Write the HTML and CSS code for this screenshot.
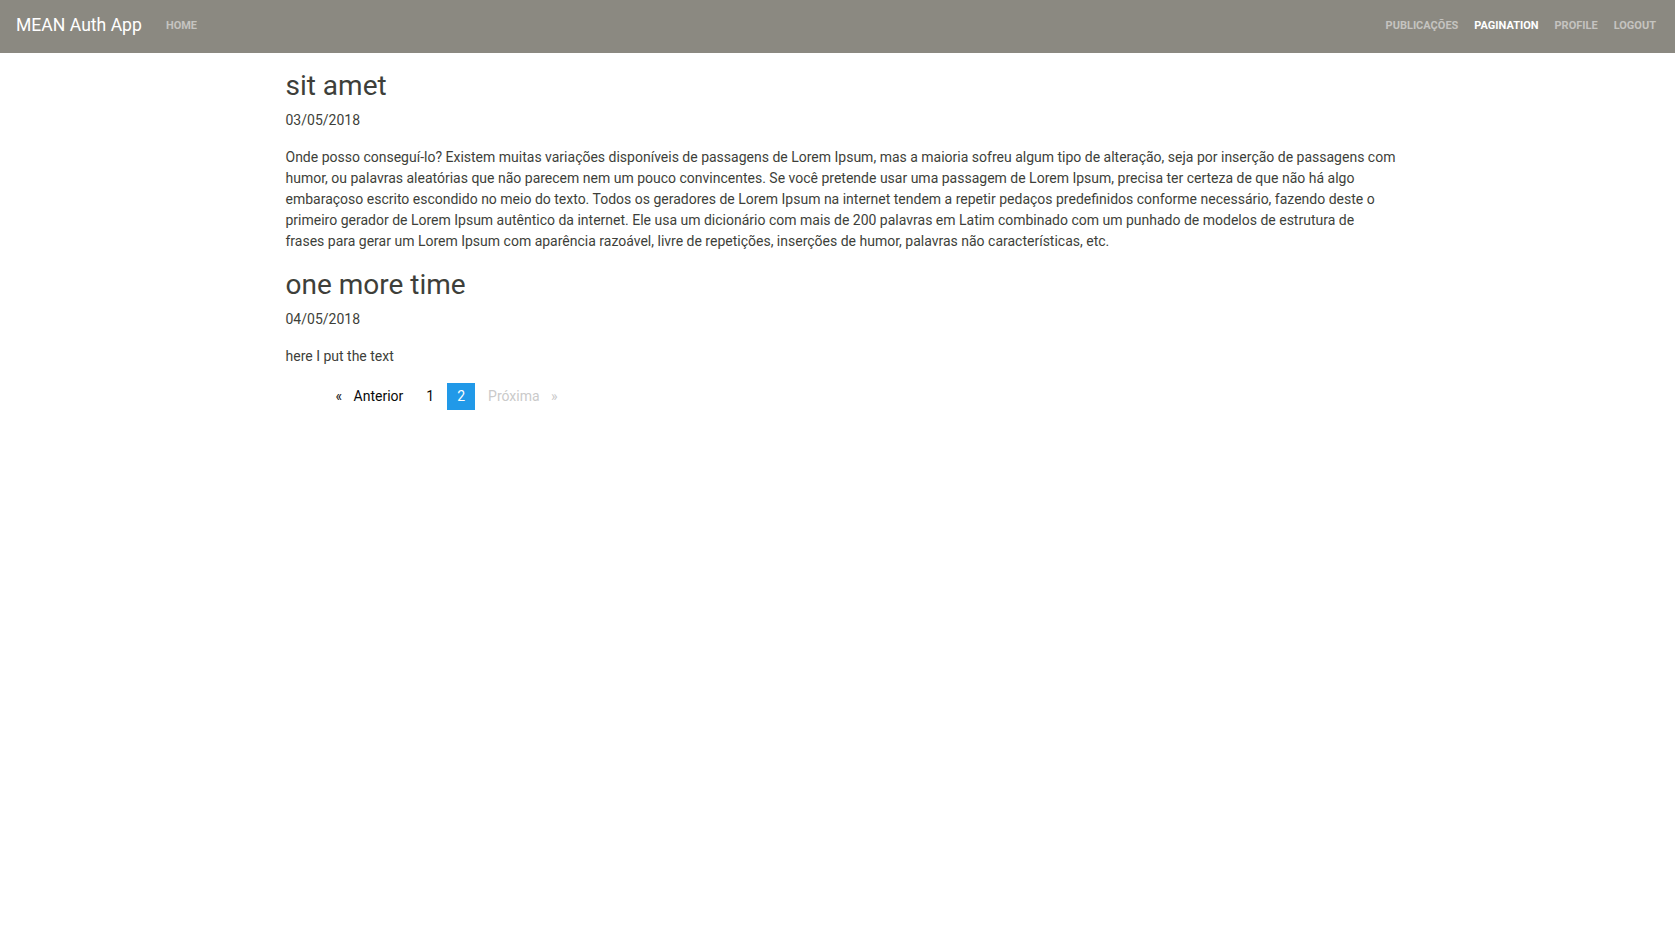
FILE: index.html
```html
<!DOCTYPE html>
<html lang="pt">
<head>
<meta charset="utf-8">
<title>MEAN Auth App</title>
<link rel="stylesheet" href="styles.css">
</head>
<body>
<nav class="navbar">
  <a class="brand" href="#">MEAN Auth App</a>
  <ul class="nav nav-left">
    <li><a class="nav-link" href="#">Home</a></li>
  </ul>
  <ul class="nav nav-right">
    <li><a class="nav-link" href="#">Publicações</a></li>
    <li><a class="nav-link active" href="#">Pagination</a></li>
    <li><a class="nav-link" href="#">Profile</a></li>
    <li><a class="nav-link" href="#">Logout</a></li>
  </ul>
</nav>
<main class="container">
  <article class="post">
    <h3 class="post-title">sit amet</h3>
    <p class="post-date">03/05/2018</p>
    <p class="post-body">Onde posso conseguí-lo? Existem muitas variações disponíveis de passagens de Lorem Ipsum, mas a maioria sofreu algum tipo de alteração, seja por inserção de passagens com humor, ou palavras aleatórias que não parecem nem um pouco convincentes. Se você pretende usar uma passagem de Lorem Ipsum, precisa ter certeza de que não há algo embaraçoso escrito escondido no meio do texto. Todos os geradores de Lorem Ipsum na internet tendem a repetir pedaços predefinidos conforme necessário, fazendo deste o primeiro gerador de Lorem Ipsum autêntico da internet. Ele usa um dicionário com mais de 200 palavras em Latim combinado com um punhado de modelos de estrutura de frases para gerar um Lorem Ipsum com aparência razoável, livre de repetições, inserções de humor, palavras não características, etc.</p>
  </article>
  <article class="post">
    <h3 class="post-title">one more time</h3>
    <p class="post-date">04/05/2018</p>
    <p class="post-body">here I put the text</p>
  </article>
  <ul class="pagination">
    <li class="prev"><a href="#">Anterior</a></li>
    <li><a href="#">1</a></li>
    <li class="current"><span>2</span></li>
    <li class="next disabled"><span>Próxima</span></li>
  </ul>
</main>
</body>
</html>
```
FILE: styles.css
```css
* { box-sizing: border-box; }
html, body { margin: 0; padding: 0; }
body {
  font-family: Roboto, "Liberation Sans", Arial, sans-serif;
  font-size: 14px;
  line-height: 1.5;
  color: #3e3f3a;
  background: #fff;
}
a { text-decoration: none; }

.navbar {
  display: flex;
  align-items: center;
  height: 53px;
  padding: 7px 11px 9px 16px;
  background: #8b8981;
}
.brand {
  font-size: 17.6px;
  line-height: 27px;
  padding: 5px 0;
  margin-right: 16px;
  color: #fff;
}
.nav {
  list-style: none;
  margin: 0;
  padding: 0;
  display: flex;
}
.nav-right { margin-left: auto; }
.nav-link {
  display: block;
  padding: 8px;
  font-size: 11px;
  font-weight: 700;
  line-height: 21px;
  text-transform: uppercase;
  color: rgba(255,255,255,0.5);
}
.nav-link.active { color: #fff; }

.container {
  width: 1140px;
  margin: 0 auto;
  padding: 16px 12px 0 18px;
}
.post-title {
  font-size: 28px;
  font-weight: 400;
  line-height: 1.2;
  margin: 0 0 8px;
  color: #3e3f3a;
}
.post:first-child .post-title { margin-bottom: 7px; }
.post-date, .post-body {
  margin: 0 0 16px;
}

.pagination {
  list-style: none;
  margin: 0 0 16px;
  padding-left: 40px;
  display: flex;
}
.pagination li {
  margin-right: 3px;
}
.pagination a, .pagination span {
  display: block;
  padding: 3px 10px;
  color: #0a0a0a;
}
.pagination .current span {
  background: #2199e8;
  color: #fefefe;
}
.pagination .disabled span { color: #cacaca; }
.pagination .prev a::before {
  content: "«";
  display: inline-block;
  margin-right: 11.5px;
}
.pagination .next span::after {
  content: "»";
  display: inline-block;
  margin-left: 11.5px;
}
```
